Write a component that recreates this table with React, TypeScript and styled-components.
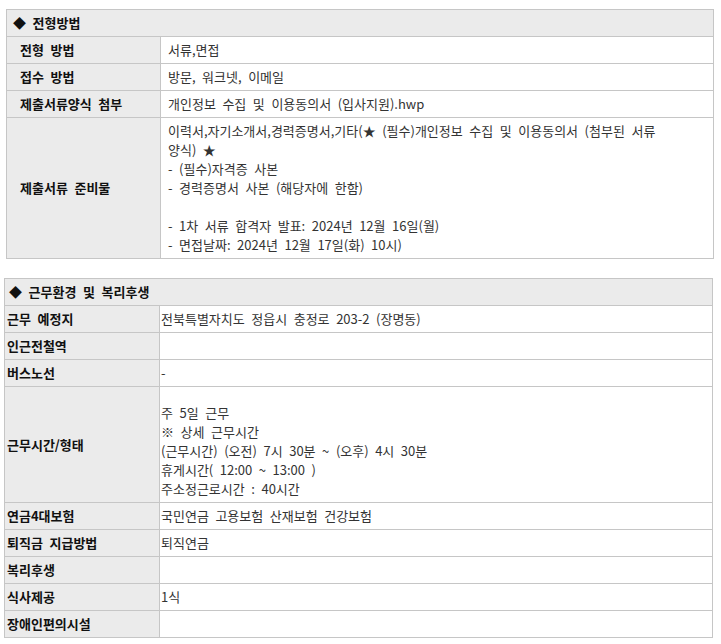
import React from "react";
import styled, { createGlobalStyle } from "styled-components";

const Global = createGlobalStyle`
  html, body { margin: 0; padding: 0; background: #fff; }
  body {
    font-family: "Noto Sans CJK KR", "Noto Sans", sans-serif;
    font-size: 13px;
    color: #333;
  }
`;

const Page = styled.div`
  display: flex;
  flex-direction: column;
  align-items: flex-start;
  gap: 19px;
  padding-top: 9px;
`;

const Table = styled.table<{ $left: number; $width: number }>`
  margin-left: ${(p) => p.$left}px;
  width: ${(p) => p.$width}px;
  border-collapse: collapse;
  table-layout: fixed;
  word-spacing: 0.28em;
  line-height: 19px;
`;

const HeadCell = styled.th<{ $pad: number }>`
  background: #ebebeb;
  border: 1px solid #c6c6c6;
  text-align: left;
  font-weight: bold;
  color: #111;
  padding: 3px 6px 4px ${(p) => p.$pad}px;
`;

const LabelCell = styled.th<{ $pad: number }>`
  background: #ebebeb;
  border: 1px solid #c6c6c6;
  text-align: left;
  font-weight: bold;
  color: #111;
  vertical-align: middle;
  padding: 3px 4px 4px ${(p) => p.$pad}px;
`;

const ValueCell = styled.td<{ $pad: number; $top?: number }>`
  background: #fff;
  border: 1px solid #c6c6c6;
  vertical-align: middle;
  color: #333;
  padding: ${(p) => p.$top ?? 3}px 6px 4px ${(p) => p.$pad}px;
`;

const Line = styled.div`
  min-height: 19px;
`;

type Row = { label: string; lines: string[]; top?: number };

const selection: Row[] = [
  { label: "전형 방법", lines: ["서류,면접"] },
  { label: "접수 방법", lines: ["방문, 워크넷, 이메일"] },
  { label: "제출서류양식 첨부", lines: ["개인정보 수집 및 이용동의서 (입사지원).hwp"] },
  {
    label: "제출서류 준비물",
    lines: [
      "이력서,자기소개서,경력증명서,기타(★ (필수)개인정보 수집 및 이용동의서 (첨부된 서류",
      "양식) ★",
      "- (필수)자격증 사본",
      "- 경력증명서 사본 (해당자에 한함)",
      "",
      "- 1차 서류 합격자 발표: 2024년 12월 16일(월)",
      "- 면접날짜: 2024년 12월 17일(화) 10시)",
    ],
  },
];

const welfare: Row[] = [
  { label: "근무 예정지", lines: ["전북특별자치도 정읍시 충정로 203-2 (장명동)"] },
  { label: "인근전철역", lines: [""] },
  { label: "버스노선", lines: ["-"] },
  {
    label: "근무시간/형태",
    top: 16,
    lines: [
      "주 5일 근무",
      "※ 상세 근무시간",
      "(근무시간) (오전) 7시 30분 ~ (오후) 4시 30분",
      "휴게시간( 12:00 ~ 13:00 )",
      "주소정근로시간 : 40시간",
    ],
  },
  { label: "연금4대보험", lines: ["국민연금 고용보험 산재보험 건강보험"] },
  { label: "퇴직금 지급방법", lines: ["퇴직연금"] },
  { label: "복리후생", lines: [""] },
  { label: "식사제공", lines: ["1식"] },
  { label: "장애인편의시설", lines: [""] },
];

type SectionProps = {
  title: string;
  rows: Row[];
  left: number;
  width: number;
  labelWidth: number;
  headPad: number;
  labelPad: number;
  valuePad: number;
};

function Section(p: SectionProps) {
  return (
    <Table $left={p.left} $width={p.width}>
      <colgroup>
        <col style={{ width: p.labelWidth }} />
        <col />
      </colgroup>
      <thead>
        <tr>
          <HeadCell colSpan={2} $pad={p.headPad}>
            ◆ {p.title}
          </HeadCell>
        </tr>
      </thead>
      <tbody>
        {p.rows.map((r) => (
          <tr key={r.label}>
            <LabelCell $pad={p.labelPad}>{r.label}</LabelCell>
            <ValueCell $pad={p.valuePad} $top={r.top}>
              {r.lines.map((l, i) => (
                <Line key={i}>{l}</Line>
              ))}
            </ValueCell>
          </tr>
        ))}
      </tbody>
    </Table>
  );
}

export default function App() {
  return (
    <>
      <Global />
      <Page>
        <Section
          title="전형방법"
          rows={selection}
          left={6}
          width={708}
          labelWidth={154}
          headPad={6}
          labelPad={13}
          valuePad={7}
        />
        <Section
          title="근무환경 및 복리후생"
          rows={welfare}
          left={4}
          width={709}
          labelWidth={155}
          headPad={4}
          labelPad={2}
          valuePad={1}
        />
      </Page>
    </>
  );
}
